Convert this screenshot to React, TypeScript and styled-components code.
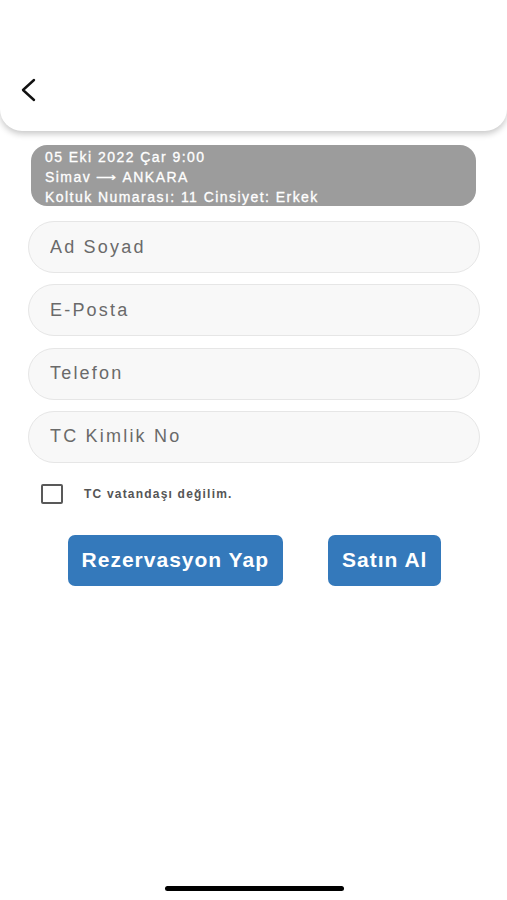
import {useState} from "react";
import styled, {createGlobalStyle} from "styled-components";

const GlobalStyle = createGlobalStyle`
    html, body {
        margin: 0;
        padding: 0;
        background: #ffffff;
    }

    body {
        font-family: "Liberation Sans", Arial, sans-serif;
    }

    * {
        box-sizing: border-box;
    }
`;

const fields = ["Ad Soyad", "E-Posta", "Telefon", "TC Kimlik No"];

const App = () => {
    const [notCitizen, setNotCitizen] = useState(false);

    return (
        <Page>
            <GlobalStyle/>
            <Header>
                <BackButton aria-label="back">
                    <svg width="18" height="24" viewBox="0 0 18 24" fill="none">
                        <polyline points="14,2 3,12 14,22" stroke="#111" strokeWidth="2.4"
                                  strokeLinecap="round" strokeLinejoin="round"/>
                    </svg>
                </BackButton>
            </Header>

            <Content>
                <TripCard>
                    <TripLine>05 Eki 2022 Çar 9:00</TripLine>
                    <TripLine>Simav ⟶ ANKARA</TripLine>
                    <TripLine>Koltuk Numarası: 11 Cinsiyet: Erkek</TripLine>
                </TripCard>

                <Fields>
                    {fields.map((f) => (
                        <Input key={f} placeholder={f}/>
                    ))}
                </Fields>

                <CheckRow onClick={() => setNotCitizen(!notCitizen)}>
                    <CheckBox $checked={notCitizen}/>
                    <CheckLabel>TC vatandaşı değilim.</CheckLabel>
                </CheckRow>

                <Actions>
                    <ActionButton>Rezervasyon Yap</ActionButton>
                    <ActionButton>Satın Al</ActionButton>
                </Actions>
            </Content>

            <Spacer/>
            <HomeIndicator/>
        </Page>
    );
};

export default App;

const Page = styled.div`
    min-height: 900px;
    display: flex;
    flex-direction: column;
    background: #ffffff;
`;

const Header = styled.div`
    height: 131px;
    background: #ffffff;
    border-radius: 0 0 22px 22px;
    box-shadow: 0 3px 6px rgba(0, 0, 0, 0.22);
    display: flex;
    align-items: flex-end;
    padding: 0 0 29px 20px;
`;

const BackButton = styled.div`
    width: 18px;
    height: 24px;
    display: flex;
`;

const Content = styled.div`
    display: flex;
    flex-direction: column;
    padding: 14px 27px 0 28px;
`;

const TripCard = styled.div`
    margin: 0 4px 0 3px;
    background: #9c9c9c;
    border-radius: 16px;
    padding: 2px 14px 3px;
    height: 61px;
`;

const TripLine = styled.div`
    color: #ffffff;
    font-size: 14px;
    line-height: 20px;
    letter-spacing: 1.45px;
    -webkit-text-stroke: 0.3px #ffffff;
    white-space: nowrap;
`;

const Fields = styled.div`
    display: flex;
    flex-direction: column;
    gap: 11.3px;
    margin-top: 15px;
`;

const Input = styled.input`
    height: 52px;
    width: 100%;
    border-radius: 26px;
    border: 1px solid #e6e6e6;
    background: #f8f8f8;
    padding: 0 21px;
    font-family: "Liberation Sans", Arial, sans-serif;
    font-size: 18px;
    letter-spacing: 2.2px;
    color: #333;
    outline: none;

    &::placeholder {
        color: #6a6a6a;
    }
`;

const CheckRow = styled.div`
    display: flex;
    align-items: center;
    gap: 21px;
    margin: 21px 0 0 13px;
    cursor: pointer;
`;

const CheckBox = styled.div<{ $checked: boolean }>`
    width: 22px;
    height: 20px;
    border: 2px solid #595959;
    border-radius: 2px;
    background: ${(p) => (p.$checked ? "#595959" : "transparent")};
`;

const CheckLabel = styled.span`
    font-size: 12px;
    font-weight: bold;
    letter-spacing: 1.2px;
    color: #555555;
`;

const Actions = styled.div`
    display: flex;
    justify-content: center;
    gap: 45px;
    margin-top: 31px;
    padding-left: 1px;
`;

const ActionButton = styled.button`
    height: 51px;
    padding: 0 14px;
    border: none;
    border-radius: 7px;
    background: #3479bb;
    color: #ffffff;
    font-family: "Liberation Sans", Arial, sans-serif;
    font-size: 21px;
    font-weight: bold;
    letter-spacing: 1px;
    cursor: pointer;
`;

const Spacer = styled.div`
    flex: 1;
`;

const HomeIndicator = styled.div`
    align-self: center;
    width: 179px;
    height: 5px;
    border-radius: 3px;
    background: #000000;
    margin: 0 0 9px 1px;
`;
